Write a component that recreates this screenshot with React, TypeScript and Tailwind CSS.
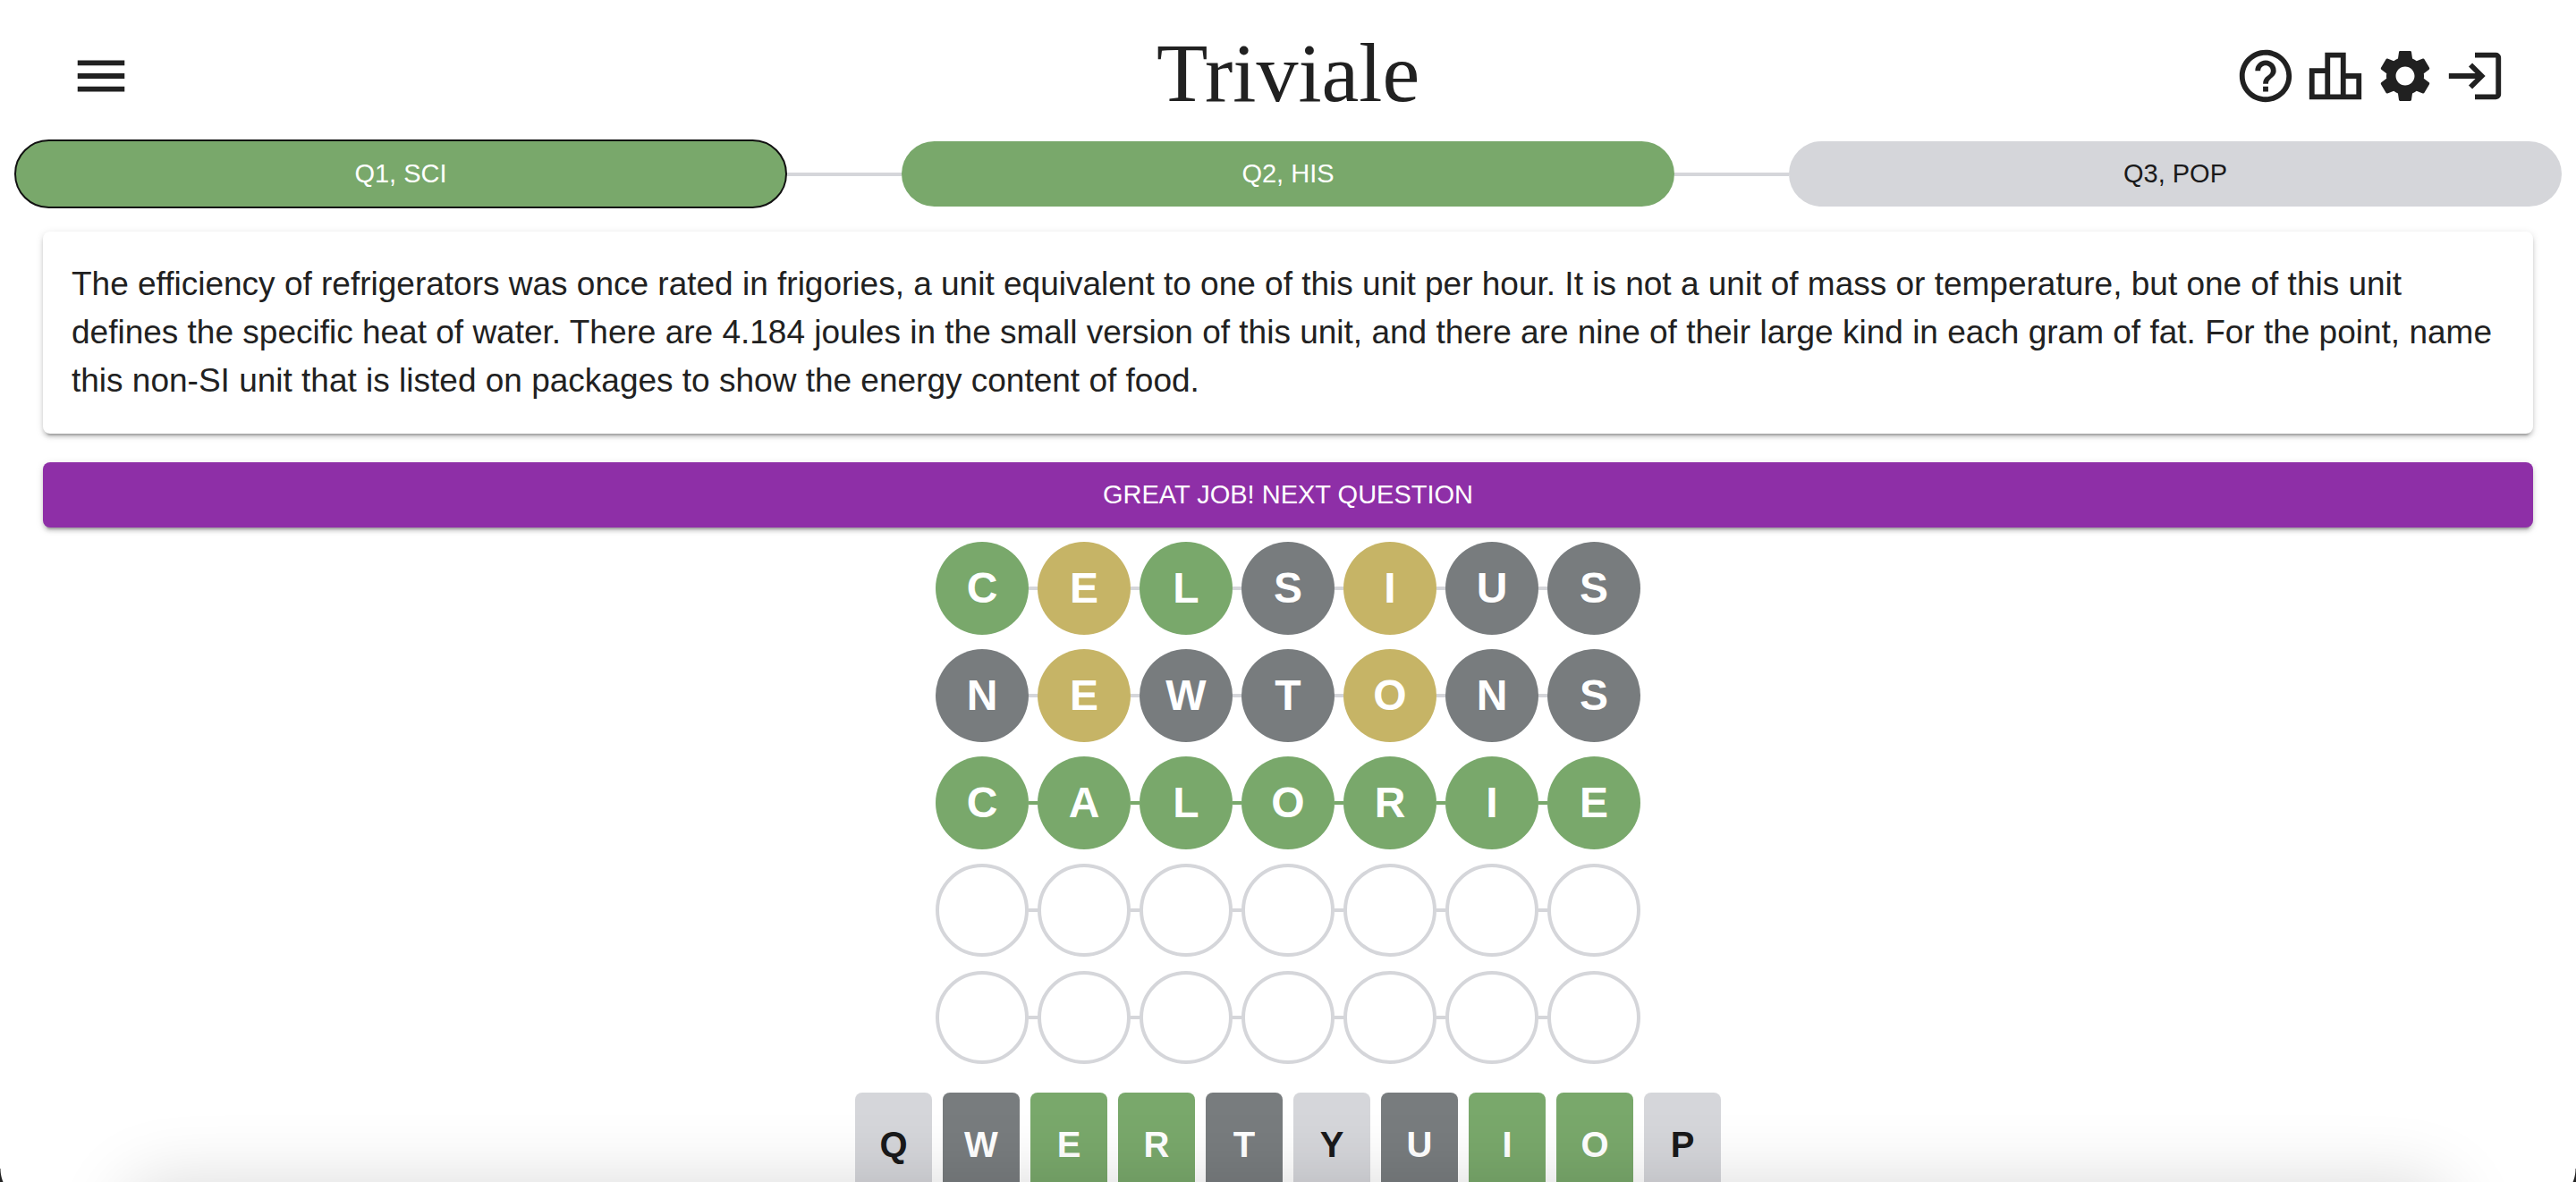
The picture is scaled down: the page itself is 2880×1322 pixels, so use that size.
import { Fragment } from "react";
import { MdHelpOutline, MdLogin, MdMenu, MdOutlineLeaderboard, MdSettings } from "react-icons/md";

type Mark = "correct" | "present" | "absent" | "unused";

const MARK: Record<string, Mark> = { g: "correct", y: "present", x: "absent", "-": "unused" };

const CELL: Record<Mark, string> = {
  correct: "bg-[#79a86b]",
  present: "bg-[#c6b466]",
  absent: "bg-[#787c7e]",
  unused: "border-4 border-[#d5d6da]",
};

const KEY: Record<Mark, string> = {
  correct: "bg-[#79a86b] text-white",
  present: "bg-[#c6b466] text-white",
  absent: "bg-[#787c7e] text-white",
  unused: "bg-[#d5d6da] text-[#1a1a1b]",
};

const QUESTIONS = [
  { label: "Q1, SCI", style: "border-2 border-[#111] bg-[#79a86b] text-white" },
  { label: "Q2, HIS", style: "bg-[#79a86b] text-white" },
  { label: "Q3, POP", style: "bg-[#d5d6da] text-[#1a1a1b]" },
];

const GUESSES = [
  { word: "CELSIUS", marks: "gygxyxx" },
  { word: "NEWTONS", marks: "xyxxyxx" },
  { word: "CALORIE", marks: "ggggggg" },
  { word: "       ", marks: "-------" },
  { word: "       ", marks: "-------" },
];

const TOP_KEYS = { letters: "QWERTYUIOP", marks: "-xggx-xgg-" };

const ACTIONS = [
  { label: "Help", Icon: MdHelpOutline },
  { label: "Statistics", Icon: MdOutlineLeaderboard },
  { label: "Settings", Icon: MdSettings },
  { label: "Log in", Icon: MdLogin },
];

const RAISED =
  "shadow-[0px_6px_2px_-4px_rgba(0,0,0,0.2),0px_4px_4px_0px_rgba(0,0,0,0.14),0px_2px_10px_0px_rgba(0,0,0,0.12)]";

function Header() {
  return (
    <header className="grid h-[156px] grid-cols-[1fr_auto_1fr] items-center px-[78px] pb-2.5 pt-6">
      <button type="button" aria-label="Menu" className="justify-self-start">
        <MdMenu size={70} />
      </button>
      <h1 className="pb-2 font-['Liberation_Serif',serif] text-[94px] leading-none">Triviale</h1>
      <div className="flex gap-2 justify-self-end">
        {ACTIONS.map(({ label, Icon }) => (
          <button key={label} type="button" aria-label={label}>
            <Icon size={70} />
          </button>
        ))}
      </div>
    </header>
  );
}

function QuestionTabs() {
  return (
    <nav className="grid grid-cols-[1fr_128px_1fr_128px_1fr] items-center px-4">
      {QUESTIONS.map(({ label, style }, i) => (
        <Fragment key={label}>
          {i > 0 && <span className="h-1 bg-[#d5d6da]" />}
          <button type="button" className={`rounded-full py-3 text-[29px] leading-[49px] ${style}`}>
            {label}
          </button>
        </Fragment>
      ))}
    </nav>
  );
}

function GuessRow({ word, marks }: { word: string; marks: string }) {
  const solved = marks === "ggggggg";
  return (
    <div className="flex items-center">
      {[...word].map((letter, i) => (
        <Fragment key={i}>
          {i > 0 && <span className={`h-1 w-2.5 ${solved ? "bg-[#79a86b]" : "bg-[#d5d6da]"}`} />}
          <span
            className={`flex size-[104px] items-center justify-center rounded-full text-5xl font-bold leading-none text-white ${CELL[MARK[marks[i]]]}`}
          >
            {letter}
          </span>
        </Fragment>
      ))}
    </div>
  );
}

export default function App() {
  return (
    <div className="relative h-screen overflow-hidden bg-white font-['Liberation_Sans',Arial,sans-serif] text-[#212121]">
      <Header />
      <QuestionTabs />
      <main className="flex flex-col px-12 pt-[26px]">
        <p className={`rounded-lg bg-white p-8 text-[37px] leading-[54px] ${RAISED}`}>
          The efficiency of refrigerators was once rated in frigories, a unit equivalent to one of this unit per hour. It
          is not a unit of mass or temperature, but one of this unit defines the specific heat of water. There are 4.184
          joules in the small version of this unit, and there are nine of their large kind in each gram of fat. For the
          point, name this non-SI unit that is listed on packages to show the energy content of food.
        </p>
        <button
          type="button"
          className={`mt-8 rounded-lg bg-[#8e2fa7] py-3 text-[29px] leading-[49px] text-white ${RAISED}`}
        >
          GREAT JOB! NEXT QUESTION
        </button>
        <section aria-label="Guesses" className="mt-4 flex flex-col items-center gap-4">
          {GUESSES.map((guess, i) => (
            <GuessRow key={i} {...guess} />
          ))}
        </section>
        <section aria-label="Keyboard" className="mt-8 flex justify-center gap-3">
          {[...TOP_KEYS.letters].map((letter, i) => (
            <button
              key={letter}
              type="button"
              className={`h-[116px] w-[86px] rounded-lg text-[40px] font-bold leading-none ${KEY[MARK[TOP_KEYS.marks[i]]]}`}
            >
              {letter}
            </button>
          ))}
        </section>
      </main>
      <div className="pointer-events-none absolute inset-x-[140px] top-full h-40 rounded-[40px] shadow-[0_0_80px_rgba(0,0,0,0.15)]" />
      <div className="pointer-events-none absolute bottom-0 left-0 h-[15px] w-1 bg-[radial-gradient(circle_40px_at_40px_0,transparent_39px,#222_40px)]" />
      <div className="pointer-events-none absolute bottom-0 right-0 h-[15px] w-1 bg-[radial-gradient(circle_40px_at_-36px_0,transparent_39px,#222_40px)]" />
    </div>
  );
}
